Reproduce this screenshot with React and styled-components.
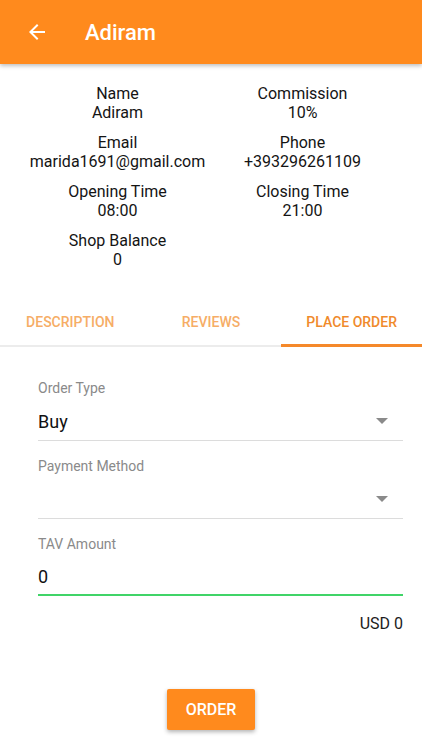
import React from 'react'
import styled, { createGlobalStyle } from 'styled-components'

const GlobalStyle = createGlobalStyle`
  * { box-sizing: border-box; }
  body {
    margin: 0;
    background: #fff;
    font-family: Roboto, "Noto Sans", sans-serif;
    color: #1c1c1c;
  }
`

const info = [
    { label: 'Name', value: 'Adiram' },
    { label: 'Commission', value: '10%' },
    { label: 'Email', value: 'marida1691@gmail.com' },
    { label: 'Phone', value: '+393296261109' },
    { label: 'Opening Time', value: '08:00' },
    { label: 'Closing Time', value: '21:00' },
    { label: 'Shop Balance', value: '0' },
]

const tabs = ['Description', 'Reviews', 'Place Order']

const ArrowBack = () => (
    <svg width="24" height="24" viewBox="0 0 24 24" fill="#fff">
        <path d="M20 11H7.83l5.59-5.59L12 4l-8 8 8 8 1.41-1.41L7.83 13H20v-2z" />
    </svg>
)

const Caret = () => (
    <svg width="12" height="6" viewBox="0 0 12 6" fill="#8a8a8a">
        <path d="M0 0h12L6 6z" />
    </svg>
)

const App = () => {
    return (
        <Page>
            <GlobalStyle />
            <Toolbar>
                <BackButton type="button">
                    <ArrowBack />
                </BackButton>
                <Title>Adiram</Title>
            </Toolbar>

            <InfoGrid>
                {info.map((item) => (
                    <InfoItem key={item.label}>
                        <div>{item.label}</div>
                        <div>{item.value}</div>
                    </InfoItem>
                ))}
            </InfoGrid>

            <TabBar>
                {tabs.map((t, i) => (
                    <Tab key={t} active={i === 2}>
                        {t}
                    </Tab>
                ))}
            </TabBar>

            <Form>
                <Field>
                    <Label>Order Type</Label>
                    <Control>
                        <span>Buy</span>
                        <Caret />
                    </Control>
                </Field>
                <Field>
                    <Label>Payment Method</Label>
                    <Control>
                        <span></span>
                        <Caret />
                    </Control>
                </Field>
                <Field>
                    <Label>TAV Amount</Label>
                    <Control focused>
                        <span>0</span>
                    </Control>
                </Field>
                <Total>USD 0</Total>
                <ButtonRow>
                    <OrderButton type="button">Order</OrderButton>
                </ButtonRow>
            </Form>
        </Page>
    )
}

const Page = styled.div`
  width: 422px;
  min-height: 750px;
  background: #fff;
`

const Toolbar = styled.header`
  height: 64px;
  background: #ff8a1d;
  display: flex;
  align-items: center;
  padding-left: 25px;
  box-shadow: 0 2px 4px rgba(0, 0, 0, 0.25);
  position: relative;
  z-index: 1;
`

const BackButton = styled.button`
  background: none;
  border: none;
  padding: 0;
  width: 24px;
  height: 24px;
  display: flex;
  cursor: pointer;
`

const Title = styled.h1`
  margin: 0 0 0 36px;
  font-size: 22px;
  font-weight: 500;
  color: #fff;
`

const InfoGrid = styled.section`
  display: grid;
  grid-template-columns: 1fr 1fr;
  row-gap: 11px;
  padding: 20px 27px 0 25px;
`

const InfoItem = styled.div`
  text-align: center;
  font-size: 16px;
  line-height: 19px;
  white-space: nowrap;
  color: #141414;
`

const TabBar = styled.nav`
  margin-top: 30px;
  display: grid;
  grid-template-columns: repeat(3, 1fr);
  border-bottom: 2px solid #ececec;
`

const Tab = styled.div`
  height: 48px;
  padding-top: 1px;
  display: flex;
  align-items: center;
  justify-content: center;
  text-transform: uppercase;
  font-size: 14px;
  font-weight: 500;
  color: ${(p) => (p.active ? '#f08a2b' : '#f6ad66')};
  border-bottom: 3px solid ${(p) => (p.active ? '#f5892a' : 'transparent')};
  margin-bottom: -2px;
`

const Form = styled.section`
  padding: 31px 19px 0 38px;
`

const Field = styled.div`
  margin-bottom: 15px;
`

const Label = styled.div`
  font-size: 14px;
  line-height: 20px;
  color: #8a8a8a;
`

const Control = styled.div`
  margin-top: 1px;
  height: ${(p) => (p.focused ? '41px' : '42px')};
  padding-top: 3px;
  display: flex;
  align-items: center;
  justify-content: space-between;
  padding-right: 15px;
  font-size: 18px;
  color: #111;
  border-bottom: ${(p) => (p.focused ? '2px solid #40d468' : '1px solid #dcdcdc')};
`

const Total = styled.div`
  margin-top: 18px;
  text-align: right;
  font-size: 16px;
  line-height: 20px;
`

const ButtonRow = styled.div`
  display: flex;
  justify-content: center;
  margin-top: 55px;
  margin-left: -19px;
`

const OrderButton = styled.button`
  width: 88px;
  height: 41px;
  border: none;
  border-radius: 2px;
  background: #ff8a1d;
  color: #fff;
  font-family: Roboto, sans-serif;
  font-size: 16px;
  font-weight: 500;
  text-transform: uppercase;
  box-shadow: 0 2px 4px rgba(0, 0, 0, 0.3);
  cursor: pointer;
`

export default App
